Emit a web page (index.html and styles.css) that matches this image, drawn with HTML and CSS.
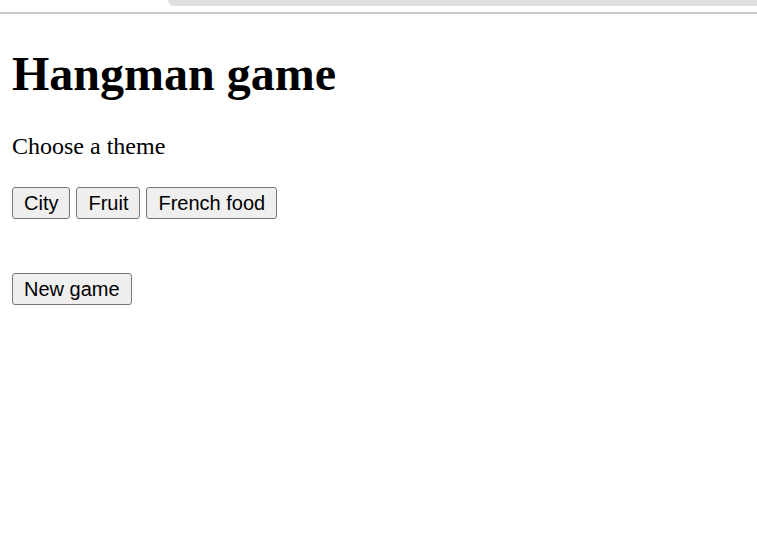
FILE: index.html
```html
<!DOCTYPE html>
<html lang="en">
<head>
    <meta charset="UTF-8">
    <meta name="viewport" content="width=device-width, initial-scale=1.0">
    <title>Hangman game</title>
    <link rel="stylesheet" href="styles.css">
</head>
<body>
    <!-- Browser tab strip -->
    <div class="chrome">
        <div class="chrome-tab"></div>
    </div>

    <div class="page">
        <h1>Hangman game</h1>
        <p>Choose a theme</p>

        <!-- Theme buttons -->
        <div class="themes">
            <button class="btn">City</button>
            <button class="btn">Fruit</button>
            <button class="btn">French food</button>
        </div>

        <div class="word" id="word"></div>

        <div class="controls">
            <button class="btn">New game</button>
        </div>
    </div>
</body>
</html>
```

FILE: styles.css
```css
body {
    margin: 0;
    background-color: #ffffff;
    font-family: "Liberation Serif", "Times New Roman", serif;
    color: #000000;
}

/* Browser chrome */
.chrome {
    display: flex;
    height: 12px;
    border-bottom: 2px solid #c8c8c8;
}

.chrome-tab {
    flex: 1;
    margin-left: 168px;
    height: 6px;
    background-color: #dfdfe1;
    border-bottom-left-radius: 10px;
}

/* Page */
.page {
    padding: 0 12px;
    font-size: 24px;
}

h1 {
    font-size: 48px;
    font-weight: bold;
    margin: 32px 0;
}

p {
    margin: 24px 0;
}

.themes {
    margin-top: 27px;
}

.word {
    height: 54px;
}

/* Buttons */
.btn {
    font-family: "Liberation Sans", Arial, sans-serif;
    font-size: 20px;
    color: #000000;
    background-color: #efefef;
    border: 1px solid #767676;
    border-radius: 3px;
    padding: 3.5px 11px;
    margin: 0;
}
```
